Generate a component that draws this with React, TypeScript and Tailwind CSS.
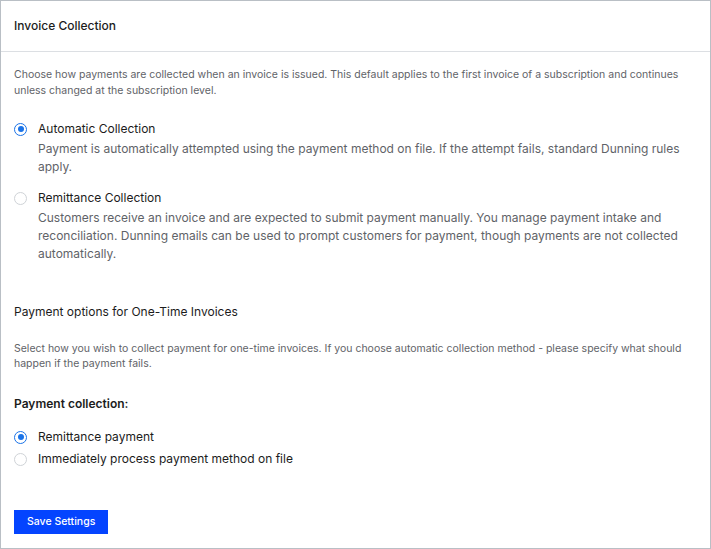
import React, { useState } from "react";

const Radio = ({ checked }: { checked: boolean }) =>
  checked ? (
    <span className="flex h-[13px] w-[13px] shrink-0 items-center justify-center rounded-full border-[1.5px] border-[#1a73e8] bg-white">
      <span className="h-[6px] w-[6px] rounded-full bg-[#1a73e8]" />
    </span>
  ) : (
    <span className="h-[13px] w-[13px] shrink-0 rounded-full border border-[#cfd3d7] bg-white" />
  );

const collectionOptions = [
  {
    id: "automatic",
    label: "Automatic Collection",
    text: "Payment is automatically attempted using the payment method on file. If the attempt fails, standard Dunning rules apply.",
  },
  {
    id: "remittance",
    label: "Remittance Collection",
    text: "Customers receive an invoice and are expected to submit payment manually. You manage payment intake and reconciliation. Dunning emails can be used to prompt customers for payment, though payments are not collected automatically.",
  },
];

const paymentOptions = [
  { id: "remittance", label: "Remittance payment" },
  { id: "immediate", label: "Immediately process payment method on file" },
];

export default function App() {
  const [collection, setCollection] = useState("automatic");
  const [payment, setPayment] = useState("remittance");

  return (
    <div className="h-[549px] w-[711px] bg-white font-[Inter,sans-serif] text-[#1c1c1c]">
      <div className="flex h-full flex-col border border-[#b9bfc5]">
        <div className="flex h-[51px] items-center border-b border-[#dcdfe3] px-[13px]">
          <h2 className="text-[12px] font-medium">Invoice Collection</h2>
        </div>

        <div className="px-[13px] pt-[15px]">
          <p className="text-[10.5px] leading-[16px] text-[#5f6368]">
            Choose how payments are collected when an invoice is issued. This
            default applies to the first invoice of a subscription and continues
            unless changed at the subscription level.
          </p>

          <div className="mt-[21px] flex flex-col gap-[13px]">
            {collectionOptions.map((opt) => (
              <label
                key={opt.id}
                onClick={() => setCollection(opt.id)}
                className="flex cursor-pointer gap-[11px]"
              >
                <span className="flex h-[18px] items-center">
                  <Radio checked={collection === opt.id} />
                </span>
                <div className="pr-[2px]">
                  <div className="text-[12px] leading-[18px]">{opt.label}</div>
                  <div className="mt-[2px] text-[12px] leading-[18px] text-[#5f6368]">
                    {opt.text}
                  </div>
                </div>
              </label>
            ))}
          </div>

          <h3 className="mt-[40px] text-[12px] leading-[18px]">
            Payment options for One-Time Invoices
          </h3>
          <p className="mt-[20px] text-[10.5px] leading-[15px] text-[#5f6368]">
            Select how you wish to collect payment for one-time invoices. If you
            choose automatic collection method - please specify what should
            happen if the payment fails.
          </p>

          <h4 className="mt-[24px] text-[12px] font-semibold leading-[18px]">
            Payment collection:
          </h4>
          <div className="mt-[15px] flex flex-col gap-[4px]">
            {paymentOptions.map((opt) => (
              <label
                key={opt.id}
                onClick={() => setPayment(opt.id)}
                className="flex cursor-pointer items-center gap-[11px] text-[12px] leading-[18px]"
              >
                <Radio checked={payment === opt.id} />
                {opt.label}
              </label>
            ))}
          </div>

          <button className="mt-[42px] h-[24px] bg-[#0444ff] px-[13px] text-[10.5px] font-medium text-white">
            Save Settings
          </button>
        </div>
      </div>
    </div>
  );
}
